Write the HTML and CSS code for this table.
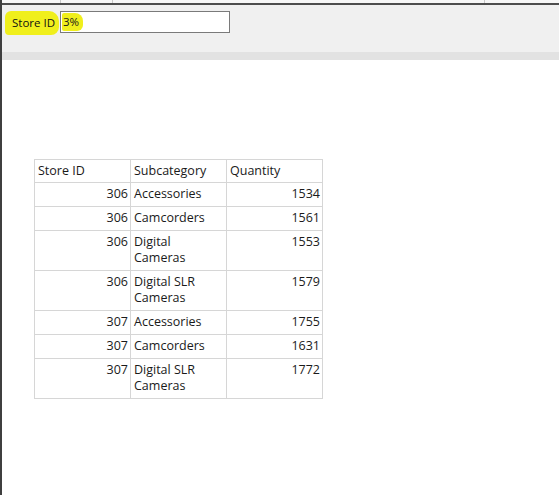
FILE: index.html
```html
<!DOCTYPE html>
<html>
<head>
<meta charset="utf-8">
<link rel="stylesheet" href="styles.css">
</head>
<body>
<div class="app">
  <div class="tabs">
    <span class="tab t1"></span>
    <span class="tab t2"></span>
    <span class="tab t3"></span>
  </div>
  <div class="toolbar">
    <label class="label"><span class="mark">Store ID</span></label>
    <div class="input"><span class="mark2">3%</span></div>
  </div>
  <div class="band"></div>
  <div class="content">
    <table class="grid">
      <thead>
        <tr><th>Store ID</th><th>Subcategory</th><th>Quantity</th></tr>
      </thead>
      <tbody>
        <tr><td class="num">306</td><td>Accessories</td><td class="num">1534</td></tr>
        <tr><td class="num">306</td><td>Camcorders</td><td class="num">1561</td></tr>
        <tr><td class="num">306</td><td>Digital<br>Cameras</td><td class="num">1553</td></tr>
        <tr><td class="num">306</td><td>Digital SLR<br>Cameras</td><td class="num">1579</td></tr>
        <tr><td class="num">307</td><td>Accessories</td><td class="num">1755</td></tr>
        <tr><td class="num">307</td><td>Camcorders</td><td class="num">1631</td></tr>
        <tr><td class="num">307</td><td>Digital SLR<br>Cameras</td><td class="num">1772</td></tr>
      </tbody>
    </table>
  </div>
</div>
</body>
</html>
```

FILE: styles.css
```css
html, body {
  margin: 0;
  padding: 0;
  background: #ffffff;
}
body {
  font-family: "Open Sans", "Noto Sans", "Liberation Sans", sans-serif;
  font-size: 12.5px;
  color: #1a1a1a;
}
.app {
  height: 495px;
  border-left: 2px solid #3f3f3f;
  box-sizing: border-box;
  display: flex;
  flex-direction: column;
}
.tabs {
  height: 3px;
  background: #f7f7f7;
  border-bottom: 2px solid #4d4d4d;
  display: flex;
}
.tab {
  border-right: 1px solid #c8c8c8;
  height: 3px;
}
.t1 { width: 58px; }
.t2 { width: 51px; }
.t3 { width: 371px; }
.toolbar {
  height: 47px;
  background: #f0f0f0;
  display: flex;
  align-items: flex-start;
  padding-top: 6px;
  box-sizing: border-box;
  font-size: 11.5px;
}
.label {
  width: 58px;
  flex: none;
  padding-left: 3px;
  box-sizing: border-box;
  padding-top: 0;
  white-space: nowrap;
}
.mark {
  display: inline-block;
  background: #f0ef1c;
  padding: 5px 4px 5px 7px;
  border-radius: 6px 10px 8px 4px;
  line-height: 14px;
  color: #111;
}
.input {
  width: 170px;
  height: 22px;
  flex: none;
  box-sizing: border-box;
  border: 1px solid #7a7a7a;
  background: #ffffff;
  padding: 1px 0 0 1px;
  line-height: 18px;
  white-space: nowrap;
}
.mark2 {
  display: inline-block;
  background: #f0ef1c;
  padding: 0 4px 0 1px;
  border-radius: 2px 8px 6px 2px;
  line-height: 18px;
}
.band {
  height: 8px;
  background: #e2e2e2;
}
.content {
  padding: 99px 0 0 32px;
}
.grid {
  border-collapse: collapse;
  border: 1px solid #d6d6d6;
}
.grid th, .grid td {
  border: 1px solid #d6d6d6;
  width: 90px;
  padding: 3px 2px 4px 3px;
  line-height: 16px;
  font-weight: normal;
  text-align: left;
  vertical-align: top;
  white-space: nowrap;
}
.grid th {
  padding-bottom: 3px;
}
.grid td.num {
  text-align: right;
}
```
